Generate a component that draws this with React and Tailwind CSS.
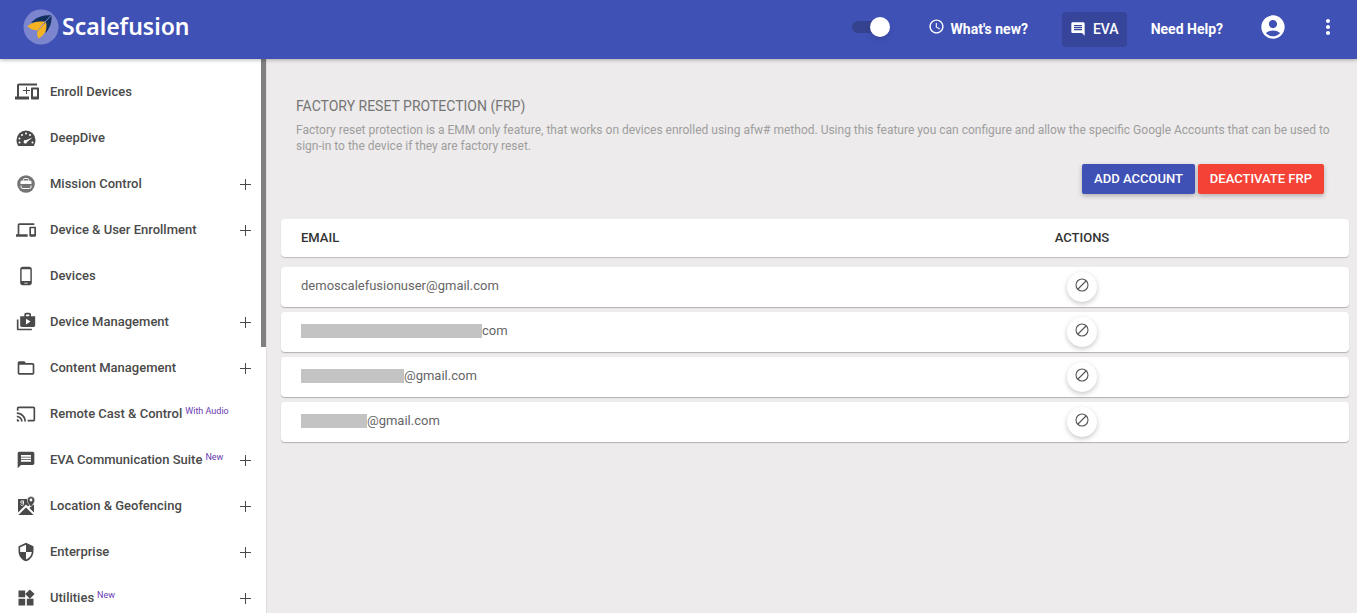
import React from "react";
import {
  MdAccessTime,
  MdAccountCircle,
  MdCast,
  MdComment,
  MdDevices,
  MdFolderOpen,
  MdMessage,
  MdMoreVert,
  MdPhoneAndroid,
  MdSecurity,
  MdShop2,
  MdWidgets,
} from "react-icons/md";

const Logo = () => (
  <svg viewBox="0 0 36 36" className="h-9 w-9" aria-hidden="true">
    <circle cx="18" cy="18" r="17.5" fill="#7b86cf" />
    <path d="M8 14C12 9 18 6 28.500 6c.5 7-1 12.500-6 18l-1-9-7-2z" fill="#12305f" />
    <path d="M28.500 6L18 17.500" stroke="#7b86cf" />
    <path d="M4.500 17.500c4-4.500 10-5.500 18-5L15.500 21.500c-4 0-7.500-1-11-4z" fill="#f5b324" />
    <path d="M15.500 29.500c-1.500-3-2-5.500-.5-8l8-8.500c1.500 7-.5 12.500-7.500 16.500z" fill="#f5b324" />
    <path d="M22.500 12.500L15 21.500" stroke="#7b86cf" strokeWidth=".8" />
  </svg>
);

const EnrollIcon = () => (
  <svg viewBox="0 0 24 18" className="ml-0.5 h-[18px] w-6 shrink-0" fill="currentColor" aria-hidden="true">
    <path d="M4 2.5h18v-2H4c-1.100 0-2 .9-2 2v11H0v3h14v-3H4z" />
    <path d="M23 4.500h-6c-.6 0-1 .4-1 1v10c0 .6.4 1 1 1h6c.6 0 1-.4 1-1v-10c0-.6-.4-1-1-1zm-1 9h-4v-7h4z" />
    <path d="M11 4h1v3h3v1h-3v3h-1V8H8V7h3z" />
  </svg>
);

const GaugeIcon = () => (
  <svg viewBox="0 0 20 17" className="h-[17px] w-5" aria-hidden="true">
    <path d="M10 .5A9.500 9.500 0 0 0 .5 10c0 2.200.6 4.200 1.700 6h15.600a11 11 0 0 0 1.700-6A9.500 9.500 0 0 0 10 .5z" fill="currentColor" />
    <g fill="#fff">
      <circle cx="3.5" cy="12.5" r="1" />
      <circle cx="3.5" cy="8.5" r="1" />
      <circle cx="6" cy="5" r="1" />
      <circle cx="10" cy="3.5" r="1" />
      <circle cx="14" cy="5" r="1" />
      <circle cx="16.5" cy="12.5" r="1" />
      <path d="M16.500 7.500l-5.500 4.500a1.700 1.700 0 1 1-1.200-1.800z" />
    </g>
  </svg>
);

const MissionIcon = () => (
  <svg viewBox="0 0 18 18" className="h-[18px] w-[18px] text-[#757575]" aria-hidden="true">
    <circle cx="9" cy="9" r="8.8" fill="currentColor" />
    <path d="M6.500 5.500v-1q0-1 1-1h3q1 0 1 1v1" fill="none" stroke="#fff" />
    <path d="M3.500 9V7q0-1.500 1.500-1.500h8q1.500 0 1.500 1.500v2z" fill="#fff" />
    <path d="M4 10.500V12q0 1.500 1.500 1.500h7q1.500 0 1.500-1.500v-1.500" fill="none" stroke="#fff" />
    <circle cx="9" cy="10" r="1.2" fill="currentColor" />
  </svg>
);

const MapIcon = () => (
  <svg viewBox="0 0 18 20" className="h-5 w-[18px]" aria-hidden="true">
    <path d="M1 3h9l1 4 6 2v9l-1 1H2l-1-1z" fill="currentColor" />
    <path d="M1 18l8-8 8 8M11 12l4-4" fill="none" stroke="#fff" strokeWidth="2" />
    <path
      d="M14 .5a3.700 3.700 0 0 0-3.700 3.700c0 2.600 3.700 6.800 3.700 6.800s3.700-4.200 3.700-6.800A3.700 3.700 0 0 0 14 .5z"
      fill="currentColor"
      stroke="#fff"
      strokeWidth=".5"
    />
    <circle cx="14" cy="4" r="1.4" fill="#fff" />
    <circle cx="5" cy="6" r="1.3" fill="none" stroke="#fff" strokeWidth=".8" />
    <path d="M6.500 4.500v4c0 1.200-2.500 1.200-3 0" fill="none" stroke="#fff" strokeWidth=".8" />
  </svg>
);

const menu = [
  { label: "Enroll Devices", icon: <EnrollIcon /> },
  { label: "DeepDive", icon: <GaugeIcon /> },
  { label: "Mission Control", icon: <MissionIcon />, expandable: true },
  { label: "Device & User Enrollment", icon: <MdDevices size={20} />, expandable: true },
  { label: "Devices", icon: <MdPhoneAndroid size={20} /> },
  { label: "Device Management", icon: <MdShop2 size={20} />, expandable: true },
  { label: "Content Management", icon: <MdFolderOpen size={20} />, expandable: true },
  { label: "Remote Cast & Control", icon: <MdCast size={20} />, tag: "With Audio" },
  { label: "EVA Communication Suite", icon: <MdMessage size={20} />, tag: "New", expandable: true },
  { label: "Location & Geofencing", icon: <MapIcon />, expandable: true },
  { label: "Enterprise", icon: <MdSecurity size={20} />, expandable: true },
  { label: "Utilities", icon: <MdWidgets size={20} />, tag: "New", expandable: true },
];

const accounts = [
  { id: 1, email: "demoscalefusionuser@gmail.com" },
  { id: 2, masked: 181, email: "com" },
  { id: 3, masked: 103, email: "@gmail.com" },
  { id: 4, masked: 66, email: "@gmail.com" },
];

const Header = () => (
  <header className="relative z-10 flex h-[59px] shrink-0 items-center bg-[#3f51b5] pl-[23px] pr-[17px] text-sm text-white shadow-[0_1px_4px_rgba(0,0,0,0.3)]">
    <a href="#home" className="mb-1.5 flex items-center gap-[3px]">
      <Logo />
      <span className="font-['Noto_Sans',sans-serif] text-[23px] font-semibold">Scalefusion</span>
    </a>
    <input
      type="checkbox"
      defaultChecked
      aria-label="Toggle view"
      className="relative mb-1.5 ml-auto h-3 w-9 appearance-none rounded-full bg-[#35438f] before:absolute before:-right-0.5 before:-top-1 before:h-5 before:w-5 before:rounded-full before:bg-white before:shadow-md before:content-['']"
    />
    <a href="#whats-new" className="ml-10 flex items-center gap-1.5 pb-0.5 font-bold">
      <MdAccessTime size={17} className="mb-1" />
      What's new?
    </a>
    <button type="button" className="ml-[34px] flex h-[35px] items-center gap-[7px] rounded-sm bg-[#36459a] px-2 pb-0.5 font-medium">
      <MdComment size={16} />
      EVA
    </button>
    <a href="#help" className="ml-6 pb-0.5 font-bold">
      Need Help?
    </a>
    <button type="button" aria-label="Account" className="mb-1.5 ml-9">
      <MdAccountCircle size={28} />
    </button>
    <button type="button" aria-label="More options" className="mb-1.5 ml-[29px]">
      <MdMoreVert size={24} />
    </button>
  </header>
);

const PlusIcon = () => (
  <svg viewBox="0 0 11 11" className="h-[11px] w-[11px]" stroke="currentColor" aria-hidden="true">
    <path d="M5.500 0v11M0 5.500h11" />
  </svg>
);

const Sidebar = () => (
  <aside className="relative w-[267px] shrink-0 border-r border-[#dddddd] bg-white">
    <nav className="h-full overflow-y-auto pt-2.5 text-[#4a4a4a] [scrollbar-width:none]">
      <ul>
        {menu.map((item) => (
          <li key={item.label}>
            <a href="#menu" className="flex h-[46px] items-center px-[15px] text-[13px] font-medium">
              <span className="mr-[13px] flex w-[22px] justify-center">{item.icon}</span>
              <span className="grow">
                {item.label}
                {item.tag && <sup className="ml-[3px] text-[9px] font-normal text-[#6a3ab2]">{item.tag}</sup>}
              </span>
              {item.expandable && <PlusIcon />}
            </a>
          </li>
        ))}
      </ul>
    </nav>
    <div className="absolute right-0 top-0 h-[52%] w-[5px] bg-[#808080]" />
  </aside>
);

const BlockIcon = () => (
  <svg viewBox="0 0 14 14" className="h-[14px] w-[14px]" fill="none" stroke="currentColor" strokeWidth="1.1" aria-hidden="true">
    <circle cx="7" cy="7" r="6" />
    <path d="M3 11l8-8" />
  </svg>
);

const AccountsTable = () => (
  <table className="mt-[25px] block text-[13px]">
    <thead className="mb-2.5 block">
      <tr className="flex h-[38px] items-center rounded-sm bg-white text-[#333333] shadow-[0_1px_1px_rgba(0,0,0,0.2)]">
        <th className="w-1/2 pl-5 text-left font-medium">EMAIL</th>
        <th className="w-1/2 text-center font-medium">ACTIONS</th>
      </tr>
    </thead>
    <tbody className="flex flex-col gap-[5px]">
      {accounts.map((account) => (
        <tr key={account.id} className="flex h-10 items-center rounded-sm bg-white text-[#666666] shadow-[0_1px_1px_rgba(0,0,0,0.25)]">
          <td className="flex w-1/2 items-center pb-0.5 pl-5">
            {account.masked && <span className="h-[14px] bg-[#c3c3c3]" style={{ width: account.masked }} />}
            {account.email}
          </td>
          <td className="flex w-1/2 justify-center">
            <button
              type="button"
              aria-label="Remove account"
              className="flex h-[30px] w-[30px] items-center justify-center rounded-full bg-white pb-1 text-[#555555] shadow-[0_2px_5px_rgba(0,0,0,0.22)]"
            >
              <BlockIcon />
            </button>
          </td>
        </tr>
      ))}
    </tbody>
  </table>
);

export default function App() {
  return (
    <div className="flex h-screen flex-col bg-[#edebeb] font-[Roboto,sans-serif]">
      <Header />
      <div className="flex min-h-0 grow">
        <Sidebar />
        <main className="min-w-0 grow overflow-y-auto pl-[14px] pr-2 pt-[37px]">
          <section className="pl-[15px] pr-3">
            <h1 className="text-sm text-[#757575]">FACTORY RESET PROTECTION (FRP)</h1>
            <p className="mt-1.5 text-xs text-[#9e9e9e]">
              Factory reset protection is a EMM only feature, that works on devices enrolled using afw# method. Using this feature you can
              configure and allow the specific Google Accounts that can be used to sign-in to the device if they are factory reset.
            </p>
            <div className="mt-2.5 flex justify-end gap-[3px] pr-[13px] text-[13px] font-medium text-white">
              <button type="button" className="h-[30px] rounded-xs bg-[#3f51b5] px-3 shadow-[0_2px_5px_rgba(0,0,0,0.26)]">
                ADD ACCOUNT
              </button>
              <button type="button" className="h-[30px] rounded-xs bg-[#f44336] px-3 shadow-[0_2px_5px_rgba(0,0,0,0.26)]">
                DEACTIVATE FRP
              </button>
            </div>
          </section>
          <AccountsTable />
        </main>
      </div>
    </div>
  );
}
